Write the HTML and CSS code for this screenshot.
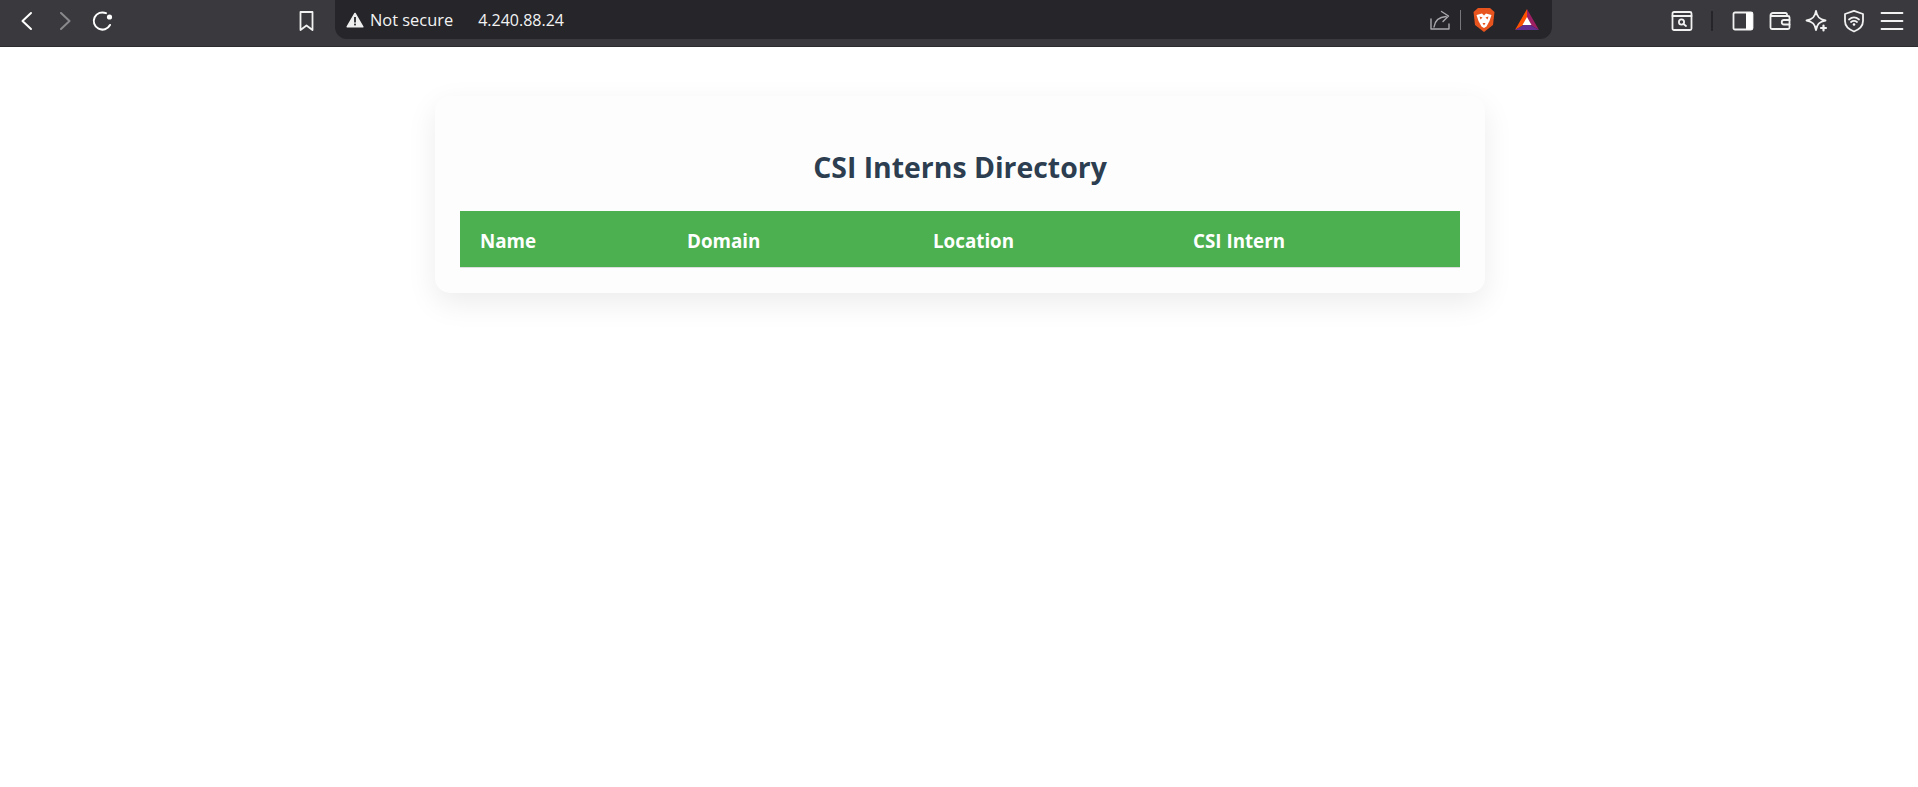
FILE: index.html
```html
<!DOCTYPE html>
<html lang="en">
<head>
<meta charset="utf-8">
<title>CSI Interns Directory</title>
<link rel="stylesheet" href="styles.css">
</head>
<body>
<header class="toolbar">
  <div class="nav">
    <svg class="ico" width="24" height="24" viewBox="0 0 24 24"><path class="st" d="M16 4 L7.5 12 L16 20"/></svg>
    <svg class="ico dim" width="24" height="24" viewBox="0 0 24 24"><path class="st" d="M8 4 L16.5 12 L8 20"/></svg>
    <svg class="ico" width="24" height="24" viewBox="0 0 24 24"><path class="st" d="M19 16 A8.6 8.6 0 1 1 15 4.2"/><circle cx="18.5" cy="8" r="2.6" fill="#fff"/></svg>
  </div>
  <svg class="ico bookmark" width="24" height="24" viewBox="0 0 24 24"><path class="st thin" d="M5.5 3 H17.5 V21 L11.5 16.5 L5.5 21 Z"/></svg>
  <div class="omnibox">
    <svg class="warn" width="18" height="16" viewBox="0 0 18 16"><path d="M9 1.500 L16.800 14.800 H1.200 Z" fill="#eee" stroke="#eee" stroke-width="1.600" stroke-linejoin="round"/><rect x="8.100" y="5" width="1.800" height="5.500" fill="#25252a"/><rect x="8.100" y="11.600" width="1.800" height="1.800" fill="#25252a"/></svg>
    <span class="secure">Not secure</span>
    <span class="addr">4.240.88.24</span>
    <div class="omni-right">
      <svg width="24" height="24" viewBox="0 0 24 24"><path class="st share" d="M3 11 V21 H21 V16 M6 19 C7 12 11 9 18 8.500 M13.500 3.500 L20.500 8 L15 13.500"/></svg>
      <span class="divider"></span>
      <svg class="brave" width="24" height="26" viewBox="0 0 24 26"><path d="M6 1 H18 L22.500 5 L21 18 L12 25 L3 18 L1.500 5 Z" fill="#e8541e"/><path d="M4.500 8 L10 6.500 L12 8.500 L14 6.500 L19.500 8 L17.500 14 L14.500 19.500 L12 21 L9.500 19.500 L6.500 14 Z" fill="#fff"/><path d="M7.500 9.500 L10.500 10.500 L8.500 12.500 Z M16.500 9.500 L13.500 10.500 L15.500 12.500 Z M10.500 16 H13.500 L12 18.500 Z" fill="#e8541e"/></svg>
      <svg class="bat" width="26" height="24" viewBox="0 0 26 24"><path d="M13 1 L25 22 L13 15 Z" fill="#9e1f63"/><path d="M13 1 L1 22 L13 15 Z" fill="#ff5000"/><path d="M1 22 H25 L13 15 Z" fill="#662d91"/><path d="M13 9 L17.500 17 H8.500 Z" fill="#fff"/></svg>
    </div>
  </div>
  <div class="tools">
    <svg width="24" height="24" viewBox="0 0 24 24"><rect class="st thin" x="2.500" y="3" width="19" height="18" rx="1.500"/><path class="st thin" d="M2.500 7 H21.500"/><circle class="st thin" cx="11.500" cy="13" r="2.600"/><path class="st thin" d="M13.500 15 L16 17"/></svg>
    <span class="tool-sep"></span>
    <svg width="24" height="24" viewBox="0 0 24 24"><rect class="st thin" x="2.500" y="3.500" width="19" height="17" rx="1.500"/><rect x="15" y="3.500" width="6.500" height="17" fill="#fff"/></svg>
    <svg width="24" height="24" viewBox="0 0 24 24"><path class="st thin" d="M19 7 V5.500 A1.500 1.500 0 0 0 17.500 4 H5 A2.500 2.500 0 0 0 2.500 6.500 V18.500 A1.500 1.500 0 0 0 4 20 H20 A1.500 1.500 0 0 0 21.500 18.500 V8.500 A1.500 1.500 0 0 0 20 7 H3.500"/><path class="st thin" d="M21.500 11 H16 A1.800 1.800 0 0 0 16 15.500 H21.500"/></svg>
    <svg width="24" height="24" viewBox="0 0 24 24"><path class="st thin" d="M11 2 C12 8 14.500 10.500 20.500 11.500 C14.500 12.500 12 15 11 21 C10 15 7.500 12.500 1.500 11.500 C7.500 10.500 10 8 11 2 Z"/><path class="st plus" d="M18.500 16.500 V21.500 M16 19 H21"/></svg>
    <svg width="24" height="24" viewBox="0 0 24 24"><path class="st thin" d="M12 1.800 L21 5 V12 C21 17.500 17 20.500 12 22.500 C7 20.500 3 17.500 3 12 V5 Z"/><path class="st thin" d="M7 10.500 C10 8 14 8 17 10.500 M9 13 C11 11.500 13 11.500 15 13"/><circle cx="12" cy="15.500" r="1.300" fill="#fff"/></svg>
    <svg width="24" height="24" viewBox="0 0 24 24"><path class="st thin" d="M1.500 4 H22.500 M1.500 12 H22.500 M1.500 20 H22.500"/></svg>
  </div>
</header>
<main class="page">
  <section class="card">
    <h1 class="title">CSI Interns Directory</h1>
    <table class="directory">
      <thead>
        <tr>
          <th class="col-name">Name</th>
          <th class="col-domain">Domain</th>
          <th class="col-location">Location</th>
          <th>CSI Intern</th>
        </tr>
      </thead>
    </table>
  </section>
</main>
</body>
</html>
```
FILE: styles.css
```css
* { box-sizing: border-box; }
html, body { margin: 0; background: #fff; height: 100%; overflow: hidden; }
body { font-family: "Open Sans", "Noto Sans", sans-serif; }
.toolbar {
  height: 47px;
  background: #3a393e;
  border-bottom: 1px solid #2c2c30;
  display: flex;
  align-items: flex-start;
  color: #fff;
}
.st { fill: none; stroke: #fff; stroke-width: 2; stroke-linecap: round; stroke-linejoin: round; }
.thin { stroke: #f1f1f1; stroke-width: 1.8; }
.plus { stroke: #f1f1f1; stroke-width: 2.2; }
.share { stroke: #a9a9ad; stroke-width: 1.4; }
.dim { opacity: .4; }
.nav { display: flex; gap: 14px; margin: 9px 0 0 15px; }
.ico { display: block; }
.bookmark { margin: 9px 0 0 180px; }
.omnibox {
  margin-left: 16px;
  width: 1217px;
  height: 39px;
  background: #25252a;
  border-radius: 0 0 12px 12px;
  display: flex;
  align-items: center;
  padding: 0 12px 0 11px;
  font-size: 16.4px;
  color: #f3f3f3;
}
.warn { margin-right: 6px; }
.addr { margin-left: 25px; font-size: 16px; }
.omni-right { margin-left: auto; display: flex; align-items: center; gap: 8px; }
.divider { width: 1px; height: 20px; background: #77777b; }
.brave { margin-left: 3px; }
.bat { margin-left: 10px; }
.tools { display: flex; align-items: center; gap: 13.3px; margin: 9px 0 0 118px; }
.tool-sep { width: 2px; height: 20px; background: #25252a; margin: 0 4px; }
.page { padding: 49px 0 0 2px; display: flex; justify-content: center; }
.card {
  width: 1050px;
  padding: 25px;
  background: #fdfdfd;
  border-radius: 15px;
  box-shadow: 0 10px 30px rgba(0, 0, 0, .08);
}
.title {
  margin: 27px 0 25px;
  text-align: center;
  font-size: 28.4px;
  font-weight: 700;
  line-height: 38px;
  color: #2c3e50;
}
.directory { width: 100%; border-collapse: collapse; }
.directory th {
  background: #4caf50;
  color: #fff;
  text-align: left;
  font-size: 18.8px;
  font-weight: 700;
  padding: 17px 20px 13px;
  border-bottom: 1px solid #ddd;
  line-height: 26px;
}
.col-name { width: 207px; }
.col-domain { width: 246px; }
.col-location { width: 260px; }
```
